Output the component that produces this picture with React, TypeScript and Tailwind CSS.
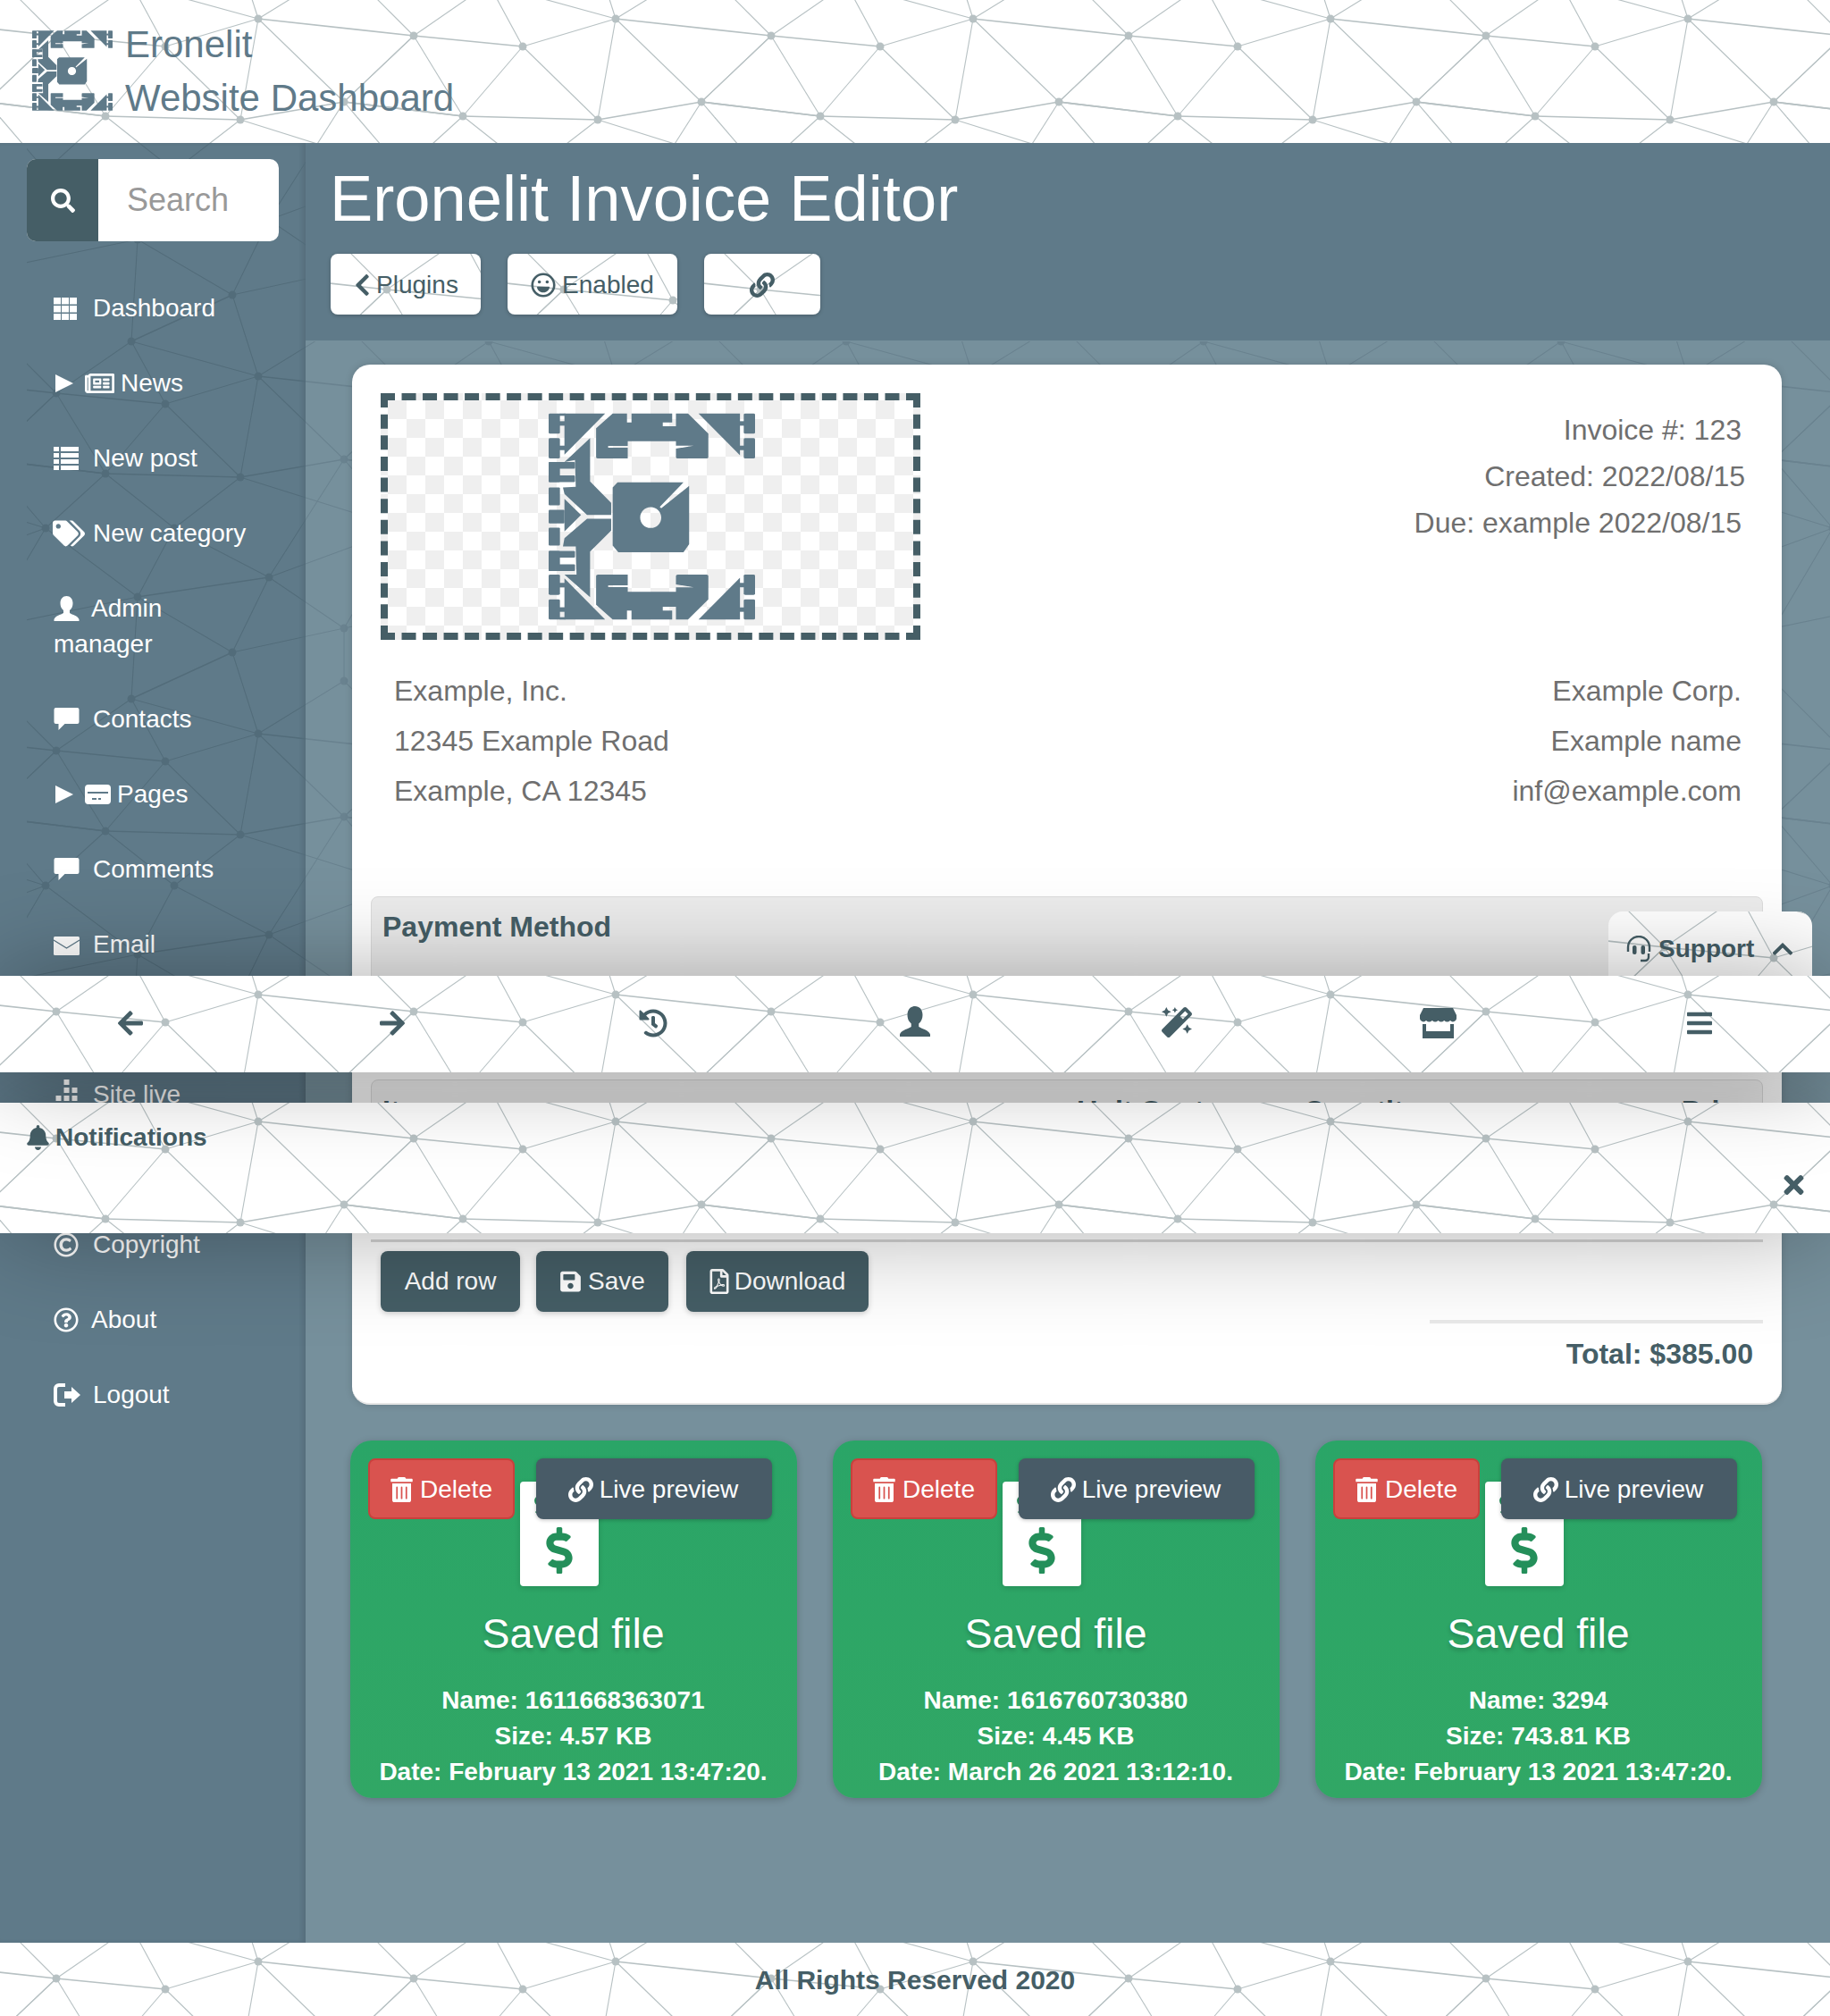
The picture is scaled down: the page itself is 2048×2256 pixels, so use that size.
import { ReactNode } from 'react';
import {
  FaArrowLeft,
  FaArrowRight,
  FaBars,
  FaBell,
  FaChevronLeft,
  FaChevronUp,
  FaDollarSign,
  FaHistory,
  FaLink,
  FaMagic,
  FaRegCopyright,
  FaRegFilePdf,
  FaRegLaugh,
  FaRegNewspaper,
  FaRegQuestionCircle,
  FaSave,
  FaSearch,
  FaTags,
  FaTimes,
  FaTrashAlt,
} from 'react-icons/fa';

// triangulated tile, 400x400, coordinates read off the reference
const P: Record<string, [number, number]> = {
  a: [289, 21], b: [63, 40], c: [185, 52], d: [118, 130], e: [269, 134], f: [385, 114],
  g: [51, 191], h: [195, 191], i: [154, 268], j: [301, 246], k: [260, 330], l: [147, 382],
  m: [385, 303], o: [385, 362],
};

const edges: [string, string, number, number][] = [
  ['a', 'b', 400, 0], ['a', 'c', 0, 0], ['a', 'e', 0, 0], ['a', 'f', 0, 0],
  ['a', 'k', 0, -400], ['a', 'l', 0, -400], ['a', 'o', 0, -400],
  ['b', 'c', 0, 0], ['b', 'd', 0, 0], ['b', 'l', 0, -400], ['b', 'f', -400, 0], ['b', 'o', -400, -400],
  ['c', 'd', 0, 0], ['c', 'e', 0, 0], ['c', 'l', 0, -400],
  ['d', 'e', 0, 0], ['d', 'f', -400, 0], ['d', 'g', 0, 0], ['d', 'h', 0, 0],
  ['e', 'f', 0, 0], ['e', 'h', 0, 0], ['e', 'g', 400, 0],
  ['f', 'b', 400, 0], ['f', 'd', 400, 0], ['f', 'g', 400, 0], ['f', 'j', 0, 0],
  ['g', 'i', 0, 0], ['g', 'm', -400, 0], ['g', 'j', -400, 0],
  ['h', 'i', 0, 0], ['h', 'j', 0, 0],
  ['i', 'j', 0, 0], ['i', 'k', 0, 0], ['i', 'l', 0, 0], ['i', 'm', -400, 0],
  ['j', 'k', 0, 0], ['j', 'm', 0, 0],
  ['k', 'l', 0, 0], ['k', 'm', 0, 0], ['m', 'o', 0, 0],
];

const heavy = ['ab', 'bc', 'de', 'df', 'fd', 'ef', 'ij', 'kl'];

function Mesh({ id, color, x = 0, y = 0 }: { id: string; color: string; x?: number; y?: number }) {
  const shifts = [-400, 0, 400];
  return (
    <svg className="absolute inset-0 w-full h-full pointer-events-none" aria-hidden="true">
      <defs>
        <pattern id={id} width="400" height="400" patternUnits="userSpaceOnUse" patternTransform={`translate(${x} ${y})`}>
          {shifts.map((sx) =>
            shifts.map((sy) => (
              <g key={`${sx}-${sy}`} transform={`translate(${sx} ${sy})`} stroke={color} fill={color}>
                {edges.map(([from, to, dx, dy]) => (
                  <line
                    key={from + to}
                    x1={P[from][0]}
                    y1={P[from][1]}
                    x2={P[to][0] + dx}
                    y2={P[to][1] + dy}
                    strokeWidth={heavy.includes(from + to) ? 1.7 : 1.15}
                  />
                ))}
                {Object.keys(P).map((n) => (
                  <circle key={n} cx={P[n][0]} cy={P[n][1]} r="4.5" stroke="none" />
                ))}
              </g>
            )),
          )}
        </pattern>
      </defs>
      <rect width="100%" height="100%" fill={`url(#${id})`} />
    </svg>
  );
}

function LogoHalf() {
  return (
    <>
      <rect x="510" y="182" width="30" height="68" rx="4" />
      <rect x="510" y="265" width="30" height="68" rx="4" />
      <rect x="538" y="208" width="16" height="15" />
      <rect x="538" y="290" width="16" height="15" />
      <polygon points="552,182 660,182 552,320" />
      <rect x="538" y="182" width="16" height="8" />
      <path d="M680 182H718V212H730V182H838V212H813V225H848V182H880L934 250V328Q934 333 929 333H853Q848 333 848 328V300L895 290H848V275H720V291H668V297H720V333H641Q636 333 636 328V232Z" />
      <polygon points="908,182 1018,182 1018,322" />
      <rect x="1028" y="182" width="30" height="68" rx="4" />
      <rect x="1028" y="265" width="30" height="68" rx="4" />
      <rect x="1016" y="208" width="14" height="15" />
      <rect x="1016" y="290" width="14" height="15" />
      <rect x="510" y="345" width="70" height="22" rx="3" />
      <rect x="510" y="390" width="70" height="22" rx="3" />
      <rect x="510" y="345" width="30" height="67" rx="3" />
      <rect x="510" y="430" width="30" height="60" rx="3" />
    </>
  );
}

function ELogo({ className }: { className: string }) {
  return (
    <svg viewBox="510 180 548 695" preserveAspectRatio="none" className={className} fill="#5f7a89">
      <LogoHalf />
      <g transform="translate(0 1055) scale(1 -1)">
        <LogoHalf />
      </g>
      <polygon points="552,345 620,265 620,410 676,482 676,522 612,522 552,452 548,430 582,428 580,338" />
      <polygon points="676,535 612,535 552,600 548,628 582,628 584,722 552,722 620,798 620,645 676,575" />
      <polygon points="552,468 596,522 552,578" />
      <rect x="510" y="505" width="42" height="46" rx="3" />
      <path
        fillRule="evenodd"
        d="M693 413H868L805 495 809 500 883 425V620L868 647H695L680 625V430ZM781 496C765 496 753 512 753 531S765 566 781 566 809 550 809 531 797 496 781 496Z"
      />
    </svg>
  );
}

function UserIcon({ className }: { className: string }) {
  return (
    <svg viewBox="0 0 28 28" className={className} fill="currentColor">
      <path d="M14 0C18 0 21 3 21 8c0 3-1 6-3.500 8v3c3 2 9 3 10.500 7v2H0v-2c1.500-4 7.500-5 10.500-7v-3C8 14 7 11 7 8c0-5 3-8 7-8z" />
    </svg>
  );
}

function GridIcon({ className }: { className: string }) {
  const cells = [0, 9, 18];
  return (
    <svg viewBox="0 0 26 25" className={className} fill="currentColor">
      {cells.map((x) =>
        cells.map((y) => <rect key={`${x}${y}`} x={x} y={y} width="8" height="7.500" />),
      )}
    </svg>
  );
}

function ListIcon({ className }: { className: string }) {
  const rows = [0, 7, 14, 21];
  return (
    <svg viewBox="0 0 28 26" className={className} fill="currentColor">
      {rows.map((y) => (
        <g key={y}>
          <rect x="0" y={y} width="6" height="5" />
          <rect x="8" y={y} width="20" height="5" />
        </g>
      ))}
    </svg>
  );
}

function ChatIcon({ className }: { className: string }) {
  return (
    <svg viewBox="0 0 28 26" className={className} fill="currentColor">
      <path d="M2 0h24a2 2 0 012 2v14a2 2 0 01-2 2H12l-7 7v-7H2a2 2 0 01-2-2V2a2 2 0 012-2z" />
    </svg>
  );
}

function EnvelopeIcon({ className }: { className: string }) {
  return (
    <svg viewBox="0 0 29 21" className={className}>
      <rect width="29" height="21" rx="1.500" fill="currentColor" />
      <path d="M0 4l14.500 9L29 4" fill="none" stroke="#5f7a89" strokeWidth="1.300" />
    </svg>
  );
}

function ModalIcon({ className }: { className: string }) {
  return (
    <svg viewBox="0 0 29 22" className={className} fill="currentColor">
      <path
        fillRule="evenodd"
        d="M4 0h21a4 4 0 014 4v14a4 4 0 01-4 4H4a4 4 0 01-4-4V4a4 4 0 014-4zM3 8v2h23V8zM8 15v2h5v-2zM15 15v2h3v-2z"
      />
    </svg>
  );
}

function LiveIcon({ className }: { className: string }) {
  return (
    <svg viewBox="0 0 28 34" className={className} fill="currentColor">
      <rect x="11" y="0" width="6" height="6" />
      <rect x="11" y="9" width="6" height="6" />
      <rect x="20" y="9" width="6" height="6" />
      <rect x="11" y="18" width="6" height="6" />
      <rect x="20" y="18" width="6" height="6" />
      <rect x="2" y="18" width="6" height="6" />
      <rect x="2" y="27" width="6" height="6" />
      <rect x="11" y="27" width="6" height="6" />
      <rect x="20" y="27" width="6" height="6" />
    </svg>
  );
}

function LogoutIcon({ className }: { className: string }) {
  return (
    <svg viewBox="0 0 31 26" className={className} fill="currentColor">
      <path d="M13 2H6a4 4 0 00-4 4v14a4 4 0 004 4h7" fill="none" stroke="currentColor" strokeWidth="4" />
      <path d="M12 9h8V4l10 9-10 9v-5h-8z" />
    </svg>
  );
}

function StoreIcon({ className }: { className: string }) {
  return (
    <svg viewBox="0 0 41 34" className={className} fill="currentColor">
      <path d="M4 0H37L41 8V11a4 4 0 01-7 3 5 5 0 01-6.800 0 5 5 0 01-6.700 0 5 5 0 01-6.700 0 5 5 0 01-6.800 0 4 4 0 01-7-3V8Z" />
      <path d="M3 18h4v8h27v-8h4v16H3z" />
    </svg>
  );
}

function HeadsetIcon({ className }: { className: string }) {
  return (
    <svg viewBox="0 0 28 30" className={className} fill="none" stroke="currentColor" strokeWidth="2.400">
      <path d="M2 18V13a12 12 0 0124 0v5" />
      <path d="M25 20v4a4 4 0 01-4 4h-5" />
      <rect x="7" y="11" width="4.500" height="10" rx="2" fill="currentColor" stroke="none" />
      <rect x="16.500" y="11" width="4.500" height="10" rx="2" fill="currentColor" stroke="none" />
    </svg>
  );
}

function Caret() {
  return (
    <svg viewBox="0 0 20 20" className="w-[20px] h-[20px] mt-[10px] mr-[13px] ml-[2px] shrink-0" fill="currentColor">
      <polygon points="0,0 20,10 0,20" />
    </svg>
  );
}

type NavItem = { icon?: ReactNode; label?: ReactNode; toggle?: boolean; textGap?: string };

const navItems: NavItem[] = [
  { icon: <GridIcon className="w-[26px] h-[25px] mr-[4px]" />, label: 'Dashboard', textGap: 'ml-[14px]' },
  { icon: <FaRegNewspaper className="w-[33px] h-[30px]" />, label: 'News', toggle: true, textGap: 'ml-[7px]' },
  { icon: <ListIcon className="w-[28px] h-[26px] mr-[2px]" />, label: 'New post', textGap: 'ml-[14px]' },
  { icon: <FaTags className="w-[36px] h-[30px] -ml-[1px]" />, label: 'New category', textGap: 'ml-[9px]' },
  {
    icon: <UserIcon className="w-[29px] h-[28px]" />,
    label: (
      <>
        Admin
        <br />
        <span className="-ml-[42px]">manager</span>
      </>
    ),
    textGap: 'ml-[13px]',
  },
  { icon: <ChatIcon className="w-[29px] h-[26px]" />, label: 'Contacts', textGap: 'ml-[15px]' },
  { icon: <ModalIcon className="w-[29px] h-[22px]" />, label: 'Pages', toggle: true, textGap: 'ml-[7px]' },
  { icon: <ChatIcon className="w-[29px] h-[26px]" />, label: 'Comments', textGap: 'ml-[15px]' },
  { icon: <EnvelopeIcon className="w-[29px] h-[21px] mt-[2px]" />, label: 'Email', textGap: 'ml-[15px]' },
  {},
  { icon: <LiveIcon className="w-[29px] h-[34px]" />, label: 'Site live', textGap: 'ml-[15px]' },
  {},
  { icon: <FaRegCopyright className="w-[28px] h-[28px]" />, label: 'Copyright', textGap: 'ml-[16px]' },
  { icon: <FaRegQuestionCircle className="w-[28px] h-[28px]" />, label: 'About', textGap: 'ml-[14px]' },
  { icon: <LogoutIcon className="w-[31px] h-[26px]" />, label: 'Logout', textGap: 'ml-[13px]' },
];

function Sidebar() {
  return (
    <aside className="relative z-10 w-[342px] shrink-0 bg-[#5f7a89] text-white text-[28px] leading-[40px] shadow-[inset_-4px_0_5px_rgba(0,0,0,0.09)]">
      <div className="absolute left-[30px] right-0 top-0 h-[1040px] overflow-hidden">
        <Mesh id="mesh-sidebar" color="#526c7a" x={-30} y={-160} />
      </div>
      <div className="relative pt-[18px] pl-[30px] pr-[30px]">
        <div className="flex h-[92px] rounded-[10px] overflow-hidden bg-white">
          <div className="w-[80px] bg-[#455e66] flex items-center justify-center">
            <FaSearch className="w-[27px] h-[27px] text-white" />
          </div>
          <div className="flex-1 pl-[32px] flex items-center text-[36px] text-[#999999]">Search</div>
        </div>
      </div>
      <nav className="relative mt-[33px] pl-[60px]">
        {navItems.map((item, n) =>
          item.label ? (
            <div key={n} className="py-[22px] flex items-start">
              {item.toggle && <Caret />}
              <span className="h-[40px] flex items-center">{item.icon}</span>
              <span className={item.textGap}>{item.label}</span>
            </div>
          ) : (
            <div key={n} className="h-[84px]" />
          ),
        )}
      </nav>
    </aside>
  );
}

function HeaderButton({ id, className, children }: { id: string; className: string; children: ReactNode }) {
  return (
    <div className={`relative h-[68px] rounded-[8px] bg-white overflow-hidden shadow-[0_1px_4px_rgba(0,0,0,0.25)] ${className}`}>
      <Mesh id={id} color="#b7c1c3" />
      <div className="relative h-full pt-[1px] flex items-center justify-center text-[28px] text-[#455e66]">{children}</div>
    </div>
  );
}

function DarkButton({ className, children }: { className: string; children: ReactNode }) {
  return (
    <div
      className={`h-[68px] rounded-[8px] bg-[#455e66] text-white text-[28px] flex items-center justify-center shadow-[0_2px_6px_rgba(0,0,0,0.2)] ${className}`}
    >
      {children}
    </div>
  );
}

const savedFiles = [
  { name: '1611668363071', size: '4.57 KB', date: 'February 13 2021 13:47:20.' },
  { name: '1616760730380', size: '4.45 KB', date: 'March 26 2021 13:12:10.' },
  { name: '3294', size: '743.81 KB', date: 'February 13 2021 13:47:20.' },
];

function FileCard({ name, size, date }: { name: string; size: string; date: string }) {
  return (
    <div className="w-[500px] h-[400px] rounded-[24px] bg-[linear-gradient(#2aa567,#31a765)] text-white shadow-[0_2px_8px_rgba(0,0,0,0.2)] pt-[20px]">
      <div className="relative z-10 flex pl-[20px]">
        <div className="w-[164px] h-[68px] pt-[1px] rounded-[8px] bg-[#d9534f] border-2 border-[#c9403c] text-[28px] flex items-center justify-center">
          <FaTrashAlt className="w-[25px] h-[28px] mr-[8px]" />
          Delete
        </div>
        <div className="ml-[24px] w-[264px] h-[68px] pt-[1px] pr-[2px] rounded-[8px] bg-[#485b67] text-[28px] flex items-center justify-center shadow-[0_1px_4px_rgba(0,0,0,0.25)]">
          <FaLink className="w-[28px] h-[28px] mr-[7px]" />
          Live preview
        </div>
      </div>
      <div className="relative -mt-[42px] ml-[190px] w-[88px] h-[117px] rounded-[4px] bg-white flex items-end justify-center pb-[14px] shadow-[0_2px_6px_rgba(0,0,0,0.15)]">
        <FaDollarSign className="absolute left-[13px] top-[12px] w-[22px] h-[28px] text-[#248f5a]" />
        <FaDollarSign className="w-[30px] h-[52px] text-[#248f5a]" />
      </div>
      <div className="mt-[25px] -ml-[1px] text-center text-[46.500px] leading-[56px] [text-shadow:0_3px_5px_rgba(0,0,0,0.2)]">Saved file</div>
      <div className="mt-[27px] -ml-[1px] text-center text-[28px] leading-[40px] font-bold">
        <div>Name: {name}</div>
        <div>Size: {size}</div>
        <div>Date: {date}</div>
      </div>
    </div>
  );
}

function Invoice() {
  return (
    <div className="relative mt-[26px] ml-[52px] mr-[54px] h-[1164px] rounded-[20px] bg-white border-b-2 border-[#e6e6e6] text-[32px] text-[#6f6f6f] shadow-[0_0_8px_rgba(0,0,0,0.15)]">
      <div className="flex justify-between pt-[32px] pl-[32px] pr-[45px]">
        <div className="w-[604px] h-[276px] border-8 border-dashed border-[#455e66] bg-[repeating-conic-gradient(#ffffff_0%_25%,#efefef_0%_50%)] bg-[length:42px_42px] flex items-center justify-center">
          <ELogo className="w-[231px] h-[232px] ml-[2px] -mt-[1px]" />
        </div>
        <div className="pt-[15px] text-right leading-[52px]">
          <div>Invoice #: 123</div>
          <div className="-mr-[4px]">Created: 2022/08/15</div>
          <div>Due: example 2022/08/15</div>
        </div>
      </div>
      <div className="flex justify-between mt-[29px] pl-[47px] pr-[45px] leading-[56px]">
        <div>
          <div>Example, Inc.</div>
          <div>12345 Example Road</div>
          <div>Example, CA 12345</div>
        </div>
        <div className="text-right">
          <div>Example Corp.</div>
          <div>Example name</div>
          <div>inf@example.com</div>
        </div>
      </div>
      <div className="mx-[21px] mt-[90px] h-[190px] rounded-[8px] bg-[#ececec] border border-[#dddddd] px-[12px] pt-[13px] text-[#455e66] font-bold leading-[40px]">
        Payment Method
      </div>
      <div className="mx-[21px] mt-[15px] h-[172px] rounded-[8px] bg-[#f5f5f5] border border-[#dddddd] px-[12px] pt-[14px] text-[#455e66] font-bold leading-[40px]">
        <div className="flex">
          <div className="w-[779px]">Item</div>
          <div className="w-[254px]">Unit Cost</div>
          <div className="w-[424px]">Quantity</div>
          <div>Price</div>
        </div>
      </div>
      <div className="mx-[21px] h-[3px] mt-[7px] bg-[#d6d6d6]" />
      <div className="flex mt-[10px] pl-[32px] gap-[18px]">
        <DarkButton className="w-[156px]">Add row</DarkButton>
        <DarkButton className="w-[148px]">
          <FaSave className="w-[25px] h-[26px] mr-[7px]" />
          Save
        </DarkButton>
        <DarkButton className="w-[204px] ml-[2px]">
          <FaRegFilePdf className="w-[22px] h-[28px] mr-[6px]" />
          Download
        </DarkButton>
      </div>
      <div className="ml-[1206px] mr-[21px] mt-[9px] h-[4px] bg-[#e9e9e9]" />
      <div className="mt-[14px] pr-[32px] text-right text-[32px] leading-[40px] font-bold text-[#455e66]">Total: $385.00</div>
    </div>
  );
}

function Main() {
  return (
    <main className="relative flex-1 min-w-0 bg-[#76909c]">
      <div className="absolute left-0 right-0 top-[222px] h-[778px] overflow-hidden">
        <Mesh id="mesh-main" color="#69828f" x={-342} y={-382} />
      </div>
      <div className="relative h-[221px] bg-[#5f7a89] pl-[28px] pt-[22px]">
        <h1 className="-ml-[1px] text-[72.300px] leading-[80px] text-white">Eronelit Invoice Editor</h1>
        <div className="flex gap-[30px] mt-[22px]">
          <HeaderButton id="mesh-plugins" className="w-[168px]">
            <FaChevronLeft className="w-[21px] h-[28px] mr-[5px]" />
            Plugins
          </HeaderButton>
          <HeaderButton id="mesh-enabled" className="w-[190px]">
            <FaRegLaugh className="w-[28px] h-[28px] mr-[7px]" />
            Enabled
          </HeaderButton>
          <HeaderButton id="mesh-link" className="w-[130px]">
            <FaLink className="w-[28px] h-[28px]" />
          </HeaderButton>
        </div>
      </div>
      <div className="pt-[1px]">
        <Invoice />
      </div>
      <div className="relative flex gap-[40px] mt-[40px] pl-[50px]">
        {savedFiles.map((file) => (
          <FileCard key={file.name} {...file} />
        ))}
      </div>
    </main>
  );
}

function Toolbar() {
  const cls = 'w-[32px] h-[32px]';
  const icons = [
    <FaArrowLeft className={cls} />,
    <FaArrowRight className={cls} />,
    <FaHistory className={cls} />,
    <UserIcon className="w-[34px] h-[34px] -mt-[5px]" />,
    <FaMagic className="w-[36px] h-[34px] -mt-[2px]" />,
    <StoreIcon className="w-[41px] h-[34px]" />,
    <FaBars className={cls} />,
  ];
  return (
    <div className="absolute z-40 left-0 right-0 top-[1092px] h-[108px] bg-white shadow-[0_0_110px_rgba(0,0,0,0.34)]">
      <Mesh id="mesh-toolbar" color="#b7c1c3" />
      <div className="relative h-full grid grid-cols-7 text-[#455e66]">
        {icons.map((icon, n) => (
          <div key={n} className="flex items-center justify-center pb-[2px]">
            {icon}
          </div>
        ))}
      </div>
    </div>
  );
}

export default function App() {
  return (
    <div className="relative w-full h-[2256px] overflow-hidden bg-white font-['Liberation_Sans',Arial,sans-serif]">
      <header className="relative h-[160px] bg-white text-[#5f7a89]">
        <Mesh id="mesh-top" color="#b7c1c3" />
        <div className="relative flex pl-[36px] pt-[20px]">
          <ELogo className="w-[90px] h-[90px] mt-[14px]" />
          <div className="ml-[14px] text-[42px] leading-[60px]">
            <div>Eronelit</div>
            <div>Website Dashboard</div>
          </div>
        </div>
      </header>
      <div className="flex h-[2014px]">
        <Sidebar />
        <Main />
      </div>
      <footer className="relative z-10 h-[82px] bg-white flex items-center justify-center text-[30px] font-bold text-[#455e66]">
        <Mesh id="mesh-footer" color="#b7c1c3" />
        <span className="relative">All Rights Reserved 2020</span>
      </footer>

      <div className="absolute z-20 left-[1800px] top-[1020px] w-[228px] h-[72px] rounded-t-[16px] bg-white overflow-hidden">
        <Mesh id="mesh-support" color="#b7c1c3" />
        <div className="relative h-full flex items-center pl-[20px] pt-[12px] text-[28px] font-bold text-[#455e66]">
          <HeadsetIcon className="w-[28px] h-[30px] mr-[8px]" />
          Support
          <FaChevronUp className="w-[26px] h-[26px] ml-[19px]" />
        </div>
      </div>

      <Toolbar />

      <div className="absolute z-30 left-0 right-0 top-[1234px] h-[146px] bg-white shadow-[0_0_120px_rgba(0,0,0,0.32)]">
        <Mesh id="mesh-notes" color="#b7c1c3" />
        <div className="relative flex items-center pl-[30px] pt-[19px] text-[28px] leading-[40px] font-bold text-[#455e66]">
          <FaBell className="w-[25px] h-[28px] mr-[7px]" />
          Notifications
        </div>
        <FaTimes className="absolute left-[1993px] top-[76px] w-[29px] h-[32px] text-[#455e66]" />
      </div>
    </div>
  );
}
